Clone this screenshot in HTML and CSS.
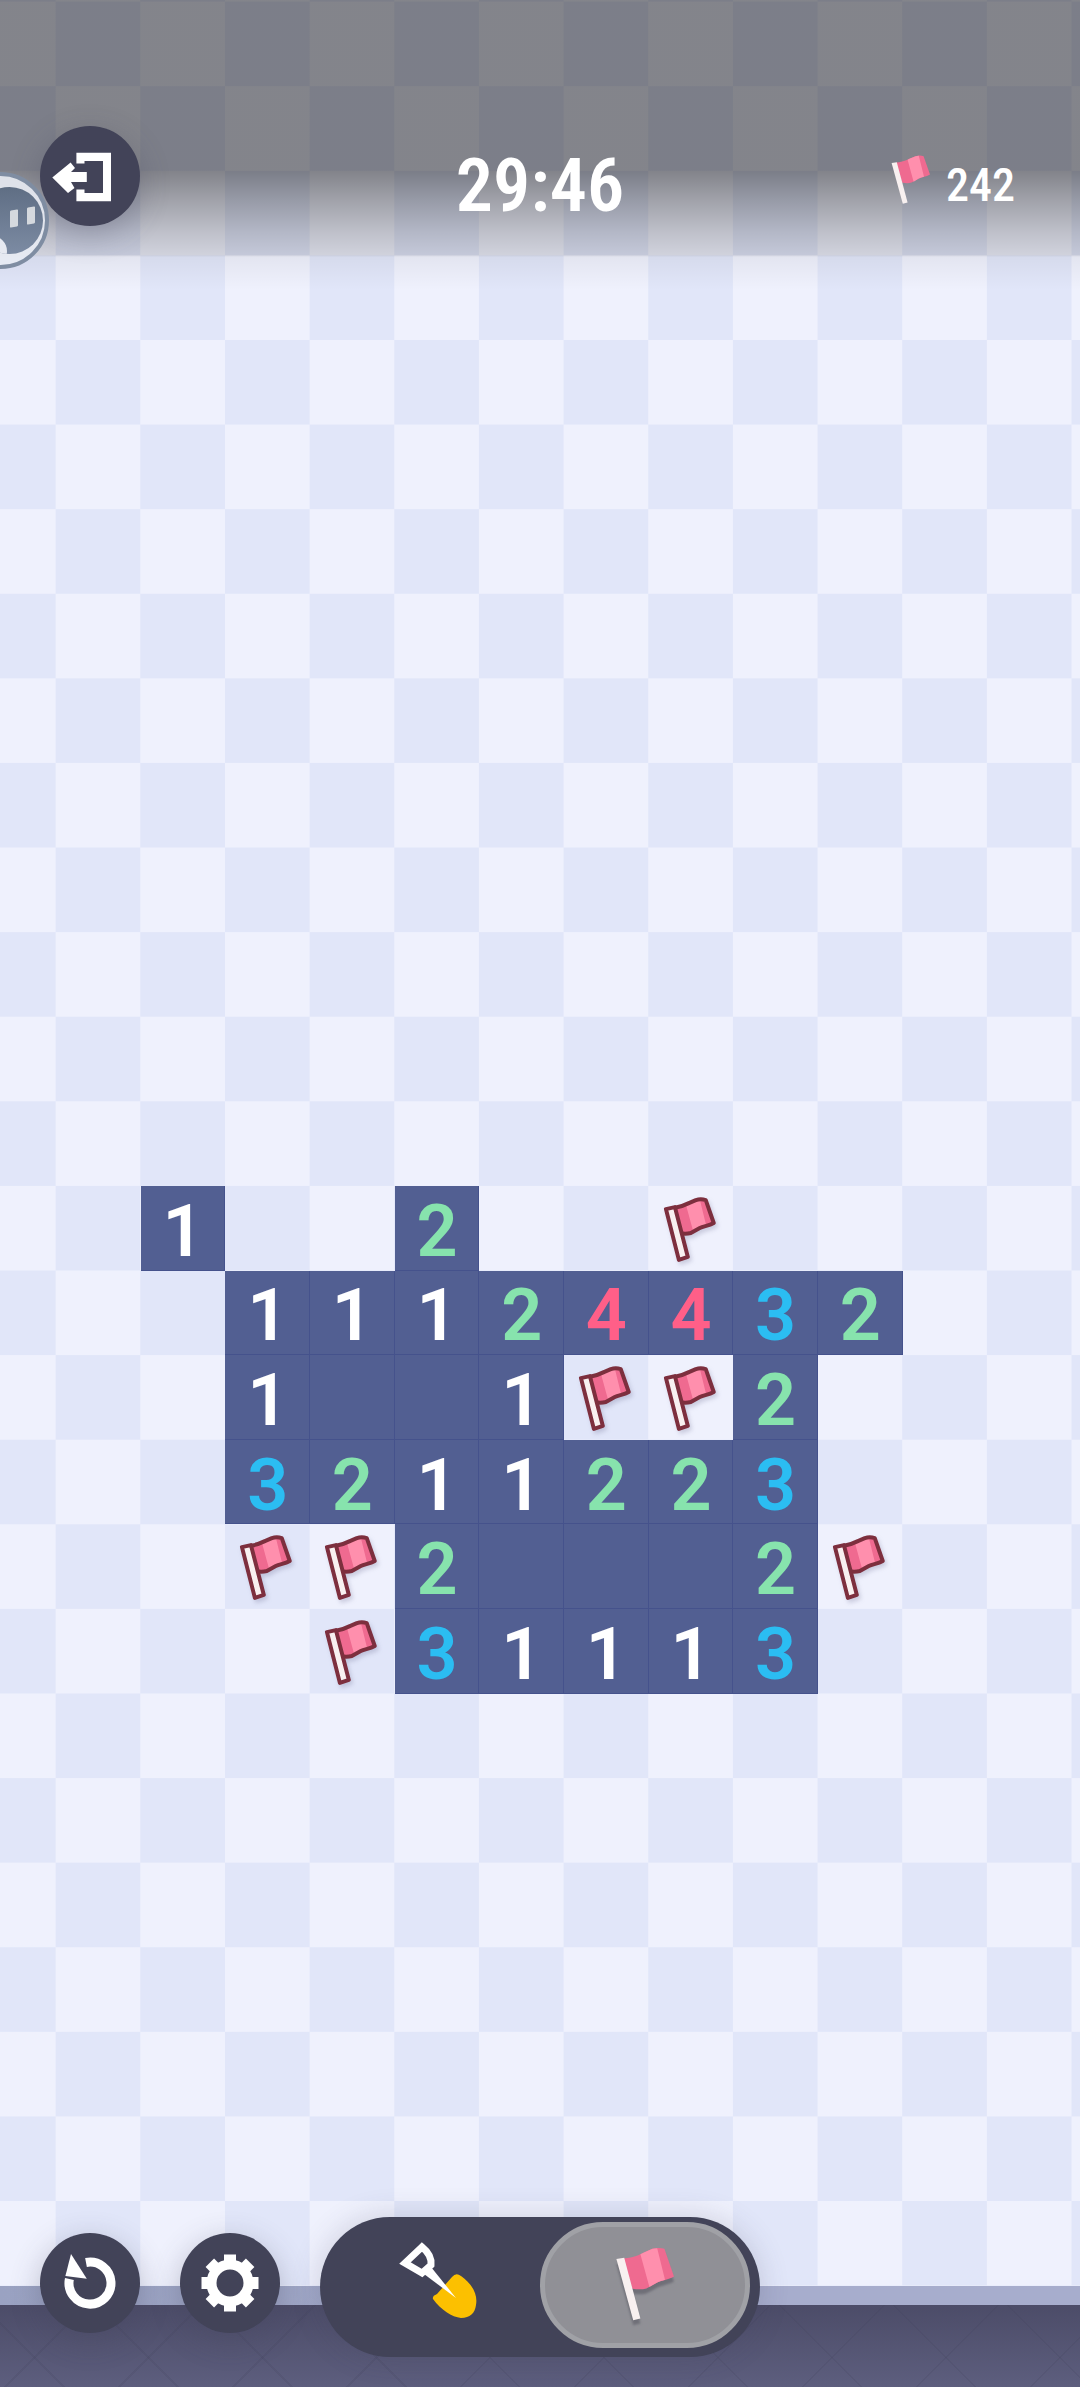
FILE: index.html
```html
<!DOCTYPE html>
<html lang="en">
<head>
<meta charset="utf-8">
<title>Minesweeper</title>
<link rel="stylesheet" href="styles.css">
</head>
<body>
<svg class="defs" width="0" height="0" aria-hidden="true">
  <defs>
    <symbol id="flag" viewBox="0 0 85 85">
      <path class="flag-side" d="M25 22C32 21 36 19 40 17L47 14C50 13 54 13 57 14L65 37C60 40 55 40 51 42L42 47C38 48 35 48 30 47Z"/>
      <path class="flag-mid" d="M37 18.500L40 17L47 14L51 13.500L57.500 39.700C55 40.500 53 41 51 42L44.500 45.800Z"/>
      <path class="flag-edge" d="M25 22C32 21 36 19 40 17L47 14C50 13 54 13 57 14L65 37C60 40 55 40 51 42L42 47C38 48 35 48 30 47Z"/>
      <path class="flag-pole" d="M17 23L26 21L39 71L30 74Z"/>
    </symbol>
    <symbol id="flag-plain" viewBox="0 0 85 85">
      <path class="flag-side" d="M23 22C32 21 36 19 40 17L47 14C50 13 54 13 57 14L65 37C60 40 55 40 51 42L42 47C38 48 35 48 30 47Z"/>
      <path class="flag-mid" d="M37 18.500L40 17L47 14L51 13.500L57.500 39.700C55 40.500 53 41 51 42L44.500 45.800Z"/>
      <path class="flag-pole" d="M17 22.500L23.500 21.500L37 72L31 73.500Z"/>
    </symbol>
  </defs>
</svg>

<main class="screen">
  <section class="board">
    <div></div><div></div><div class="open n1">1</div><div></div><div></div><div class="open n2">2</div><div></div><div></div><div class="cell-flag"><svg class="flag-icon outlined"><use href="#flag"/></svg></div><div></div><div></div><div></div><div></div><div></div>
    <div></div><div></div><div></div><div class="open n1">1</div><div class="open n1">1</div><div class="open n1">1</div><div class="open n2">2</div><div class="open n4">4</div><div class="open n4">4</div><div class="open n3">3</div><div class="open n2">2</div><div></div><div></div><div></div>
    <div></div><div></div><div></div><div class="open n1">1</div><div class="open"></div><div class="open"></div><div class="open n1">1</div><div class="cell-flag"><svg class="flag-icon outlined"><use href="#flag"/></svg></div><div class="cell-flag"><svg class="flag-icon outlined"><use href="#flag"/></svg></div><div class="open n2">2</div><div></div><div></div><div></div><div></div>
    <div></div><div></div><div></div><div class="open n3">3</div><div class="open n2">2</div><div class="open n1">1</div><div class="open n1">1</div><div class="open n2">2</div><div class="open n2">2</div><div class="open n3">3</div><div></div><div></div><div></div><div></div>
    <div></div><div></div><div></div><div class="cell-flag"><svg class="flag-icon outlined"><use href="#flag"/></svg></div><div class="cell-flag"><svg class="flag-icon outlined"><use href="#flag"/></svg></div><div class="open n2">2</div><div class="open"></div><div class="open"></div><div class="open"></div><div class="open n2">2</div><div class="cell-flag"><svg class="flag-icon outlined"><use href="#flag"/></svg></div><div></div><div></div><div></div>
    <div></div><div></div><div></div><div></div><div class="cell-flag"><svg class="flag-icon outlined"><use href="#flag"/></svg></div><div class="open n3">3</div><div class="open n1">1</div><div class="open n1">1</div><div class="open n1">1</div><div class="open n3">3</div><div></div><div></div><div></div><div></div>
  </section>
  <div class="band"></div>
  <div class="floor"></div>

  <header class="hud">
    <button class="round" aria-label="Exit">
      <svg viewBox="0 0 100 100" class="round-icon"><path class="white" d="M36.400 26.800H71V75.200H36.400V63.500H44.500V67H63V35H44.500V37.500H36.400Z"/><path class="white" d="M12.300 51.500L30.600 36.500L35 42L31 46H46.800V56H31L34.500 62L28 67Z"/></svg>
    </button>
    <div class="timer"><span>29:46</span></div>
    <div class="count">
      <svg class="count-flag"><use href="#flag-plain"/></svg>
      <span class="count-num">242</span>
    </div>
  </header>

  <div class="bubble"><div class="bubble-core"><i></i><i></i></div></div>

  <nav class="toolbar">
    <button class="round" aria-label="Restart">
      <svg viewBox="0 0 100 100" class="round-icon"><path class="ring" d="M46 29.500A21 21 0 1 1 29.400 46"/><path class="white" d="M31 21L25.400 43L46.800 45.700Z"/></svg>
    </button>
    <button class="round" aria-label="Settings">
      <svg viewBox="0 0 100 100" class="round-icon">
        <circle class="gear-ring" cx="50" cy="50" r="18.500"/>
        <g class="white">
          <rect x="44" y="21.500" width="12" height="10"/>
          <rect x="44" y="21.500" width="12" height="10" transform="rotate(45 50 50)"/>
          <rect x="44" y="21.500" width="12" height="10" transform="rotate(90 50 50)"/>
          <rect x="44" y="21.500" width="12" height="10" transform="rotate(135 50 50)"/>
          <rect x="44" y="21.500" width="12" height="10" transform="rotate(180 50 50)"/>
          <rect x="44" y="21.500" width="12" height="10" transform="rotate(225 50 50)"/>
          <rect x="44" y="21.500" width="12" height="10" transform="rotate(270 50 50)"/>
          <rect x="44" y="21.500" width="12" height="10" transform="rotate(315 50 50)"/>
        </g>
      </svg>
    </button>
    <div class="mode-pill">
      <div class="mode-dig">
        <svg viewBox="0 0 84 84" class="shovel">
          <path class="shovel-blade" d="M55 39Q59 34 64 38C75 46 81 56 79 67C78 75 73 80 64 80C55 79 44 72 36 61Q35 58 40 56Z"/>
          <path class="shovel-grip" d="M25 9L8 25L25 35L34 27Q35 17 25 9Z"/>
          <path class="white" d="M27 36L34 29L59 60Z"/>
        </svg>
      </div>
      <div class="mode-flag">
        <svg class="big-flag"><use href="#flag-plain"/></svg>
      </div>
    </div>
  </nav>
</main>
</body>
</html>
```

FILE: styles.css
```css
* { box-sizing: border-box; }
html, body { margin: 0; padding: 0; height: 100%; overflow: hidden; background: #eff1fd; }
.defs { position: absolute; }

.screen {
  position: relative;
  height: 2387px;
  width: 1080px;
  overflow: hidden;
  display: flex;
  flex-direction: column;
  font-family: Roboto, "Liberation Sans", sans-serif;
}

/* board */
.board {
  flex: none;
  width: 1185.240px;
  height: 2286px;
  margin-left: -28.560px;
  padding-top: 1186px;
  display: grid;
  grid-template-columns: repeat(14, 84.660px);
  grid-auto-rows: 84.600px;
  align-content: start;
  background: conic-gradient(#e1e6f9 25%, #eff1fd 0 50%, #e1e6f9 0 75%, #eff1fd 0);
  background-size: 169.320px 169.200px;
  background-position: 0 1.600px;
}
.open {
  background: #525f92;
  box-shadow: inset -1px -1px 0 #45528c;
  display: flex;
  align-items: center;
  justify-content: center;
  padding-top: 7px;
  font-size: 72px;
  font-weight: 600;
  line-height: 1;
  font-stretch: 88%;
}
.n1 { color: #ffffff; }
.n2 { color: #87e3ad; }
.n3 { color: #2bbdf2; }
.n4 { color: #ff5f88; }
.cell-flag { display: flex; }
.flag-icon { width: 85px; height: 85px; filter: drop-shadow(2px 3px 2px rgba(90, 90, 130, .25)); }

.flag-side { fill: #ef6a90; stroke: none; }
.flag-mid { fill: #ff8fad; stroke: none; }
.flag-pole { fill: #f8f0f0; }
.flag-edge { fill: none; }
.outlined { stroke: #7d2f3e; stroke-width: 4px; stroke-linejoin: round; }

/* ground */
.band { flex: none; height: 19px; background: linear-gradient(90deg, #9aa2c2, #a7adcd 70%); }
.floor {
  flex: 1;
  background:
    repeating-linear-gradient(45deg, transparent 0 44px, rgba(62, 62, 88, .16) 44px 46px, transparent 46px 80.600px),
    repeating-linear-gradient(-45deg, transparent 0 34px, rgba(62, 62, 88, .16) 34px 36px, transparent 36px 80.600px),
    linear-gradient(#4c4c68, #5d5e7e);
}

/* top overlay */
.hud {
  position: absolute;
  top: 0;
  left: 0;
  width: 100%;
  height: 300px;
  padding: 126px 0 0 40px;
  display: grid;
  grid-template-columns: 1fr auto 1fr;
  align-items: start;
  background: linear-gradient(rgba(0, 0, 0, .45) 0, rgba(0, 0, 0, .45) 172px, rgba(0, 0, 0, .33) 200px, rgba(0, 0, 0, .2) 233px, rgba(0, 0, 0, .13) 255px, rgba(0, 0, 0, .05) 257px, rgba(0, 0, 0, 0) 290px);
}
.round {
  width: 100px;
  height: 100px;
  padding: 0;
  border: 0;
  border-radius: 50%;
  background: #424358;
  box-shadow: 0 8px 30px rgba(66, 67, 88, .3);
}
.round-icon { display: block; width: 100px; height: 100px; }
.white { fill: #ffffff; }
.ring { fill: none; stroke: #ffffff; stroke-width: 9px; }
.gear-ring { fill: none; stroke: #ffffff; stroke-width: 10px; }

.timer {
  color: #ffffff;
  font-size: 74px;
  font-weight: 600;
  line-height: 74px;
  padding-top: 23px;
  margin-left: -40px;
  font-stretch: 75%;
}
.count {
  display: flex;
  align-items: flex-start;
  justify-self: end;
  padding: 19px 65px 0 0;
}
.count-flag { width: 68px; height: 68px; }
.count-num {
  color: #ffffff;
  font-size: 46px;
  font-weight: 500;
  line-height: 46px;
  margin-top: 17px;
  font-stretch: 80%;
}

/* floating assistive bubble */
.bubble {
  position: absolute;
  left: -48px;
  top: 172px;
  width: 97px;
  height: 97px;
  border-radius: 50%;
  border: 4px solid #7f8da2;
  background: rgba(232, 235, 243, .9);
}
.bubble-core {
  position: absolute;
  left: 20px;
  top: 11px;
  width: 67px;
  height: 67px;
  border-radius: 50%;
  overflow: hidden;
  background: linear-gradient(#5f6e84, #7c8ba3);
}
.bubble-core::after {
  content: "";
  position: absolute;
  left: 1px;
  top: 49px;
  width: 30px;
  height: 30px;
  border-radius: 50%;
  background: #e6e9f1;
}
.bubble-core i {
  position: absolute;
  top: 23px;
  width: 8px;
  height: 17px;
  border-radius: 1px;
  background: #d5d9de;
  transform: skewY(-10deg);
}
.bubble-core i:first-child { left: 34px; }
.bubble-core i:last-child { left: 51px; top: 20px; }

/* bottom toolbar */
.toolbar {
  position: absolute;
  left: 40px;
  top: 2216.500px;
  display: flex;
  align-items: flex-start;
  gap: 40px;
}
.toolbar .round { margin-top: 16.500px; }
.mode-pill {
  width: 439.500px;
  height: 140px;
  border-radius: 70px;
  padding: 5.500px 9.500px 9px 0;
  background: #424358;
  display: flex;
  box-shadow: 0 0 30px rgba(66, 67, 88, .2);
}
.mode-dig { flex: 1; display: flex; align-items: center; justify-content: center; padding: 0 0 9px 18px; }
.shovel { width: 84px; height: 84px; }
.shovel-blade { fill: #fcc000; }
.shovel-grip { fill: none; stroke: #ffffff; stroke-width: 7px; stroke-linejoin: miter; }
.mode-flag {
  flex: none;
  width: 210px;
  height: 125.500px;
  border-radius: 63px;
  background: #909096;
  border: 5px solid #a0a1a6;
  display: flex;
  align-items: center;
  justify-content: center;
}
.big-flag {
  width: 102px;
  height: 102px;
  margin: 0 0 4px 4px;
  filter: drop-shadow(0 5px 1px rgba(90, 90, 100, .6));
}
```
